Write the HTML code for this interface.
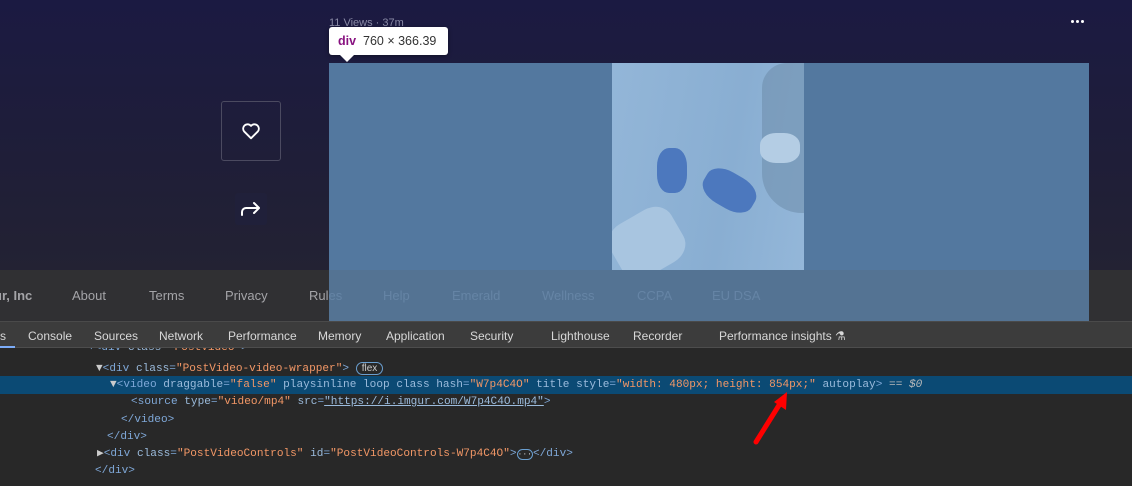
<!DOCTYPE html>
<html><head><meta charset="utf-8"><style>
*{margin:0;padding:0;box-sizing:border-box}
body{width:1132px;height:486px;overflow:hidden;position:relative;font-family:"Liberation Sans",sans-serif;background:#282828}
.top{position:absolute;left:0;top:0;width:1132px;height:270px;background:linear-gradient(#1b1a42,#1f1e38 60%,#232233)}
.foot{position:absolute;left:0;top:270px;width:1132px;height:51px;background:#303033}
.foot span{position:absolute;top:18px;font-size:13px;color:#a4a4a8}
.ov1{position:absolute;left:329px;top:63px;width:760px;height:207px;background:#53789f}
.ov2{position:absolute;left:329px;top:270px;width:760px;height:51px;background:#5a7fa4}
.img{position:absolute;left:612px;top:63px;width:192px;height:207px;background:linear-gradient(100deg,#93b6d8,#89aed2 60%,#94b7d9);overflow:hidden}
.tabs{position:absolute;left:0;top:321px;width:1132px;height:27px;background:#3c3c3c;border-top:1px solid #4a4a4a;border-bottom:1px solid #4d4d4d}
.tabs span{position:absolute;top:7px;font-size:12px;color:#d8d8d8}
.l{position:absolute;height:17px;line-height:17px;white-space:pre}
.t{color:#7fa8d8}.a{color:#9bbbdc}.v{color:#f29766}
</style></head><body>
<div class="top"></div>
<div style="position:absolute;left:329px;top:17px;font-size:11px;color:#8a8aa6">11 Views · 37m</div>
<div style="position:absolute;left:1071px;top:20px;width:3px;height:3px;background:#fff;border-radius:50%;box-shadow:5px 0 #fff,10px 0 #fff"></div>
<div style="position:absolute;left:221px;top:101px;width:60px;height:60px;border:1px solid #4b4a60;border-radius:3px"></div>
<svg style="position:absolute;left:240px;top:120px" width="22" height="22" viewBox="0 0 24 24"><path d="M12 20 L4.5 12.5 A4.6 4.6 0 0 1 12 6.5 A4.6 4.6 0 0 1 19.5 12.5 Z" fill="none" stroke="#fff" stroke-width="2" stroke-linejoin="round"/></svg>
<div style="position:absolute;left:235px;top:193px;width:32px;height:32px;background:#20203a;border-radius:3px"></div>
<svg style="position:absolute;left:240px;top:199px" width="22" height="20" viewBox="0 0 22 20"><path d="M2 16 V13 A4 4 0 0 1 6 9 H19 M14 4 L19 9 L14 14" fill="none" stroke="#fff" stroke-width="2" stroke-linecap="round" stroke-linejoin="round"/></svg>
<div class="foot"><span style="left:-6px;font-weight:bold">ur, Inc</span><span style="left:72px">About</span><span style="left:149px">Terms</span><span style="left:225px">Privacy</span><span style="left:309px">Rules</span><span style="left:383px">Help</span><span style="left:452px">Emerald</span><span style="left:542px">Wellness</span><span style="left:637px">CCPA</span><span style="left:712px">EU DSA</span></div>
<div class="ov1"></div>
<div class="img">
<div style="position:absolute;left:150px;top:0;width:50px;height:150px;background:#6f8fae;border-radius:25px 0 0 40px;opacity:.6"></div>
<div style="position:absolute;left:148px;top:70px;width:40px;height:30px;background:#b4cde4;border-radius:40%"></div>
<div style="position:absolute;left:45px;top:85px;width:30px;height:45px;background:#4c78be;border-radius:40%"></div>
<div style="position:absolute;left:90px;top:110px;width:55px;height:35px;background:#4c78be;border-radius:40%;transform:rotate(30deg)"></div>
<div style="position:absolute;left:0;top:150px;width:70px;height:60px;background:#a8c5e0;border-radius:30%;transform:rotate(-30deg)"></div>
</div>
<div class="ov2" style="opacity:.85"></div>
<div style="position:absolute;left:329px;top:27px;width:119px;height:28px;background:#fff;border-radius:3px;box-shadow:0 1px 4px rgba(0,0,0,.4);font-size:12.5px;line-height:28px;padding-left:9px;color:#333"><b style="color:#881280">div</b>&nbsp; 760 × 366.39</div>
<div style="position:absolute;left:340px;top:55px;width:0;height:0;border-left:7px solid transparent;border-right:7px solid transparent;border-top:7px solid #fff"></div>
<div class="tabs"><span style="left:0">s</span><div style="position:absolute;left:0;top:24px;width:15px;height:2px;background:#7cacf8"></div><span style="left:28px">Console</span><span style="left:94px">Sources</span><span style="left:159px">Network</span><span style="left:228px">Performance</span><span style="left:318px">Memory</span><span style="left:386px">Application</span><span style="left:470px">Security</span><span style="left:551px">Lighthouse</span><span style="left:633px">Recorder</span><span style="left:719px">Performance insights ⚗</span></div>
<div style="position:absolute;left:0;top:348px;width:1132px;height:138px;overflow:hidden;font-family:'Liberation Mono',monospace;font-size:11.1px">
<div style="position:absolute;left:0;top:28px;width:1132px;height:18px;background:#0b4a74"></div>
<div class="l t" style="left:88px;top:-8px">▾&lt;div <span class="a">class</span>=<span class="v">"PostVideo"</span>&gt;</div>
<div class="l" style="left:96px;top:12px"><span style="color:#ccc">▼</span><span class="t">&lt;div </span><span class="a">class</span><span class="t">=</span><span class="v">"PostVideo-video-wrapper"</span><span class="t">&gt;</span> <span style="font-family:'Liberation Sans';font-size:10px;color:#ccc;border:1px solid #6a9fd0;border-radius:8px;padding:0 5px">flex</span></div>
<div class="l" style="left:110px;top:29px"><span style="color:#ccc">▼</span><span class="t">&lt;video </span><span class="a">draggable</span><span class="t">=</span><span class="v">"false"</span><span class="a"> playsinline loop class hash</span><span class="t">=</span><span class="v">"W7p4C4O"</span><span class="a"> title style</span><span class="t">=</span><span class="v">"width: 480px; height: 854px;"</span><span class="a"> autoplay</span><span class="t">&gt;</span><span style="color:#bbb"> == <i>$0</i></span></div>
<div class="l" style="left:131px;top:46px"><span class="t">&lt;source </span><span class="a">type</span><span class="t">=</span><span class="v">"video/mp4"</span><span class="a"> src</span><span class="t">=</span><span class="a" style="text-decoration:underline">"https://i.imgur.com/W7p4C4O.mp4"</span><span class="t">&gt;</span></div>
<div class="l t" style="left:121px;top:64px">&lt;/video&gt;</div>
<div class="l t" style="left:107px;top:81px">&lt;/div&gt;</div>
<div class="l" style="left:97px;top:98px"><span style="color:#ccc">▶</span><span class="t">&lt;div </span><span class="a">class</span><span class="t">=</span><span class="v">"PostVideoControls"</span><span class="a"> id</span><span class="t">=</span><span class="v">"PostVideoControls-W7p4C4O"</span><span class="t">&gt;</span><span style="border:1px solid #6a9fd0;border-radius:6px;font-size:8px;color:#ccc">···</span><span class="t">&lt;/div&gt;</span></div>
<div class="l t" style="left:95px;top:115px">&lt;/div&gt;</div>
</div>
<svg style="position:absolute;left:748px;top:390px" width="45" height="60"><path d="M8 52 L33 12" stroke="#f00" stroke-width="5" stroke-linecap="round"/><path d="M26 12 L39 2 L38 20 Z" fill="#f00"/></svg>
</body></html>
